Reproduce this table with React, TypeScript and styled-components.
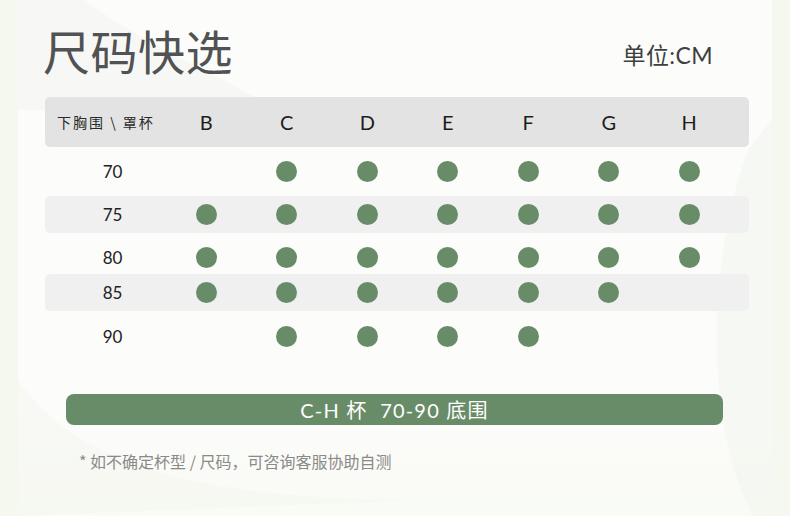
import React from "react";
import styled, { createGlobalStyle } from "styled-components";

const Global = createGlobalStyle`
  html, body { margin: 0; padding: 0; background: #f5f8ee; }
  * { box-sizing: border-box; }
`;

const LATIN = `"Lato", "Noto Sans CJK SC", sans-serif`;
const CJK = `"Noto Sans CJK SC", "Noto Sans", sans-serif`;
const GREEN = "#698c68";

const Page = styled.div`
  width: 790px;
  height: 516px;
  display: flex;
  background: #f5f8ee;
  overflow: hidden;
`;

const Card = styled.div`
  position: relative;
  margin-left: 18px;
  width: 754px;
  height: 516px;
  padding: 26px 0 0 25px;
  background: linear-gradient(180deg, #fcfcfa 0%, #fcfcfa 80%, #f9fbf5 100%);
  overflow: hidden;
`;

const Deco = styled.svg`
  position: absolute;
  inset: 0;
  width: 754px;
  height: 516px;
  pointer-events: none;
`;

const Content = styled.div`
  position: relative;
  display: flex;
  flex-direction: column;
`;

const TitleRow = styled.div`
  display: flex;
  align-items: center;
  justify-content: space-between;
  height: 48px;
  padding-right: 59px;
`;

const Title = styled.h1`
  margin: 0;
  font-family: ${CJK};
  font-weight: 400;
  font-size: 47px;
  line-height: 48px;
  color: #505254;
  letter-spacing: 0.5px;
`;

const Unit = styled.div`
  margin-top: 8px;
  font-family: ${LATIN};
  font-size: 23px;
  letter-spacing: 0.4px;
  color: #3d3f40;
`;

const Table = styled.div`
  margin-top: 23px;
  margin-left: 2px;
  width: 704px;
  display: flex;
  flex-direction: column;
`;

const Row = styled.div<{ $h: number; $band?: boolean; $head?: boolean; $pt?: number }>`
  display: grid;
  grid-template-columns: 121px repeat(7, 80.5px);
  align-items: center;
  height: ${(p) => p.$h}px;
  padding-top: ${(p) => p.$pt ?? 0}px;
  background: ${(p) => (p.$head ? "#e3e3e3" : p.$band ? "#f0f0f0" : "transparent")};
  border-radius: ${(p) => (p.$head || p.$band ? "5px" : "0")};
`;

const HeadLabel = styled.div`
  padding-left: 12px;
  font-family: ${CJK};
  font-size: 14px;
  letter-spacing: 2px;
  color: #2a2a2a;
  white-space: pre;
`;

const HeadCell = styled.div`
  text-align: center;
  font-family: ${LATIN};
  font-size: 20px;
  color: #1c1c1c;
`;

const RowLabel = styled.div`
  padding-left: 14px;
  text-align: center;
  font-family: ${LATIN};
  font-size: 17px;
  color: #222;
`;

const Cell = styled.div`
  display: flex;
  justify-content: center;
  align-items: center;
`;

const Dot = styled.span`
  width: 21px;
  height: 21px;
  border-radius: 50%;
  background: ${GREEN};
`;

const Banner = styled.div`
  margin-top: 33px;
  margin-left: 23px;
  width: 657px;
  height: 31px;
  border-radius: 8px;
  background: ${GREEN};
  display: flex;
  align-items: center;
  justify-content: center;
  font-family: ${LATIN};
  font-size: 20px;
  color: #ffffff;
  white-space: pre;
  letter-spacing: 1.2px;
`;

const Note = styled.p`
  margin: 25px 0 0 36px;
  font-family: ${CJK};
  font-size: 16px;
  line-height: 22px;
  color: #8a8a8a;
`;

const cups = ["B", "C", "D", "E", "F", "G", "H"];

const rows: { band: string; cups: string; h: number; pt?: number; shaded?: boolean }[] = [
  { band: "70", cups: "CDEFGH", h: 49 },
  { band: "75", cups: "BCDEFGH", h: 37, shaded: true },
  { band: "80", cups: "BCDEFGH", h: 41, pt: 7 },
  { band: "85", cups: "BCDEFG", h: 37, shaded: true },
  { band: "90", cups: "CDEF", h: 50 },
];

export default function App() {
  return (
    <Page>
      <Global />
      <Card>
        <Deco viewBox="0 0 754 516">
          <path d="M0 0 L66 0 C120 40 190 70 260 110 L0 110 Z" fill="#eef2ea" opacity="0.35" />
          <path d="M730 150 C690 260 685 420 735 516 L754 516 L754 120 Z" fill="#f0f5ea" opacity="0.45" />
          <path d="M0 380 C60 470 200 500 400 500 L0 516 Z" fill="#f3f6ee" opacity="0.4" />
        </Deco>
        <Content>
          <TitleRow>
            <Title>尺码快选</Title>
            <Unit>单位:CM</Unit>
          </TitleRow>
          <Table>
            <Row $h={50} $head>
              <HeadLabel>{"下胸围 \\ 罩杯"}</HeadLabel>
              {cups.map((c) => (
                <HeadCell key={c}>{c}</HeadCell>
              ))}
            </Row>
            {rows.map((r) => (
              <Row key={r.band} $h={r.h} $pt={r.pt} $band={r.shaded}>
                <RowLabel>{r.band}</RowLabel>
                {cups.map((c) => (
                  <Cell key={c}>{r.cups.includes(c) ? <Dot /> : null}</Cell>
                ))}
              </Row>
            ))}
          </Table>
          <Banner>{"C-H 杯  70-90 底围"}</Banner>
          <Note>* 如不确定杯型 / 尺码，可咨询客服协助自测</Note>
        </Content>
      </Card>
    </Page>
  );
}
